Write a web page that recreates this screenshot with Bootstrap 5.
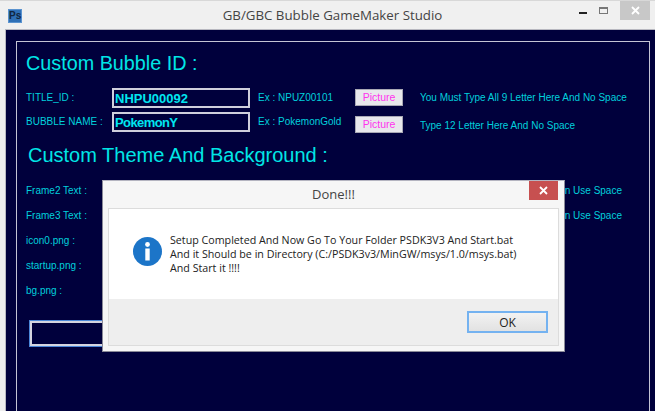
<!DOCTYPE html>
<html lang="en">
<head>
  <meta charset="UTF-8">
  <title>GB/GBC Bubble GameMaker Studio</title>
  <link href="https://cdn.jsdelivr.net/npm/bootstrap@5.3.0/dist/css/bootstrap.min.css" rel="stylesheet">
  <style>
    html, body { height: 411px; overflow: hidden; }
    body { background: #eeeeee; font-family: "Liberation Sans", Arial, sans-serif; color: #00d0dc; font-size: 10px; line-height: 1.2; }
    .app-shell { height: 411px; border-top: 1px solid #d8d8d8; }
    .title-strip { height: 28px; background: #f0f0f0; font-family: "Open Sans", "Noto Sans", sans-serif; font-size: 13.3px; color: #444; }
    .ps-logo { width: 14px; height: 14px; margin-left: 8px; background: #2f6fb5; border: 1px solid #5b93cf; color: #12263f; font-size: 10px; font-weight: 700; line-height: 12px; text-align: center; font-family: "Liberation Sans", sans-serif; }
    .title-text { left: 0; right: 0; top: 7px; text-align: center; padding-left: 10px; }
    .win-btn { width: 21px; height: 19px; }
    .win-min { width: 8px; height: 2px; background: #222; margin-top: 5px; }
    .win-max { width: 9px; height: 7px; border: 1px solid #777; border-top-width: 2px; }
    .win-close { width: 30px; height: 19px; background: #c8c8c8; color: #fff; margin: 0 5px 0 6px; }
    .client-area { margin-left: 5px; background: #00003c; border-top: 1px solid #b8b8c0; border-left: 1px solid #b8b8c0; height: 382px; padding: 11px 0 0 10px; }
    .group-frame { border: 1px solid #c4c4d4; border-bottom: 0; width: 634px; height: 371px; padding-left: 9px; }
    .head-one { font-size: 19.8px; margin: 9px 0 0; color: #00e6e6; font-weight: 400; line-height: 24px; }
    .head-two { font-size: 20px; margin: 9px 0 0 2px; color: #00e6e6; font-weight: 400; line-height: 24px; }
    .id-row { height: 24px; margin-top: 0; }
    .id-row-first { margin-top: 11px; }
    .col-label { width: 86px; flex: none; }
    .name-box { width: 138px; height: 20px; flex: none; background: #00003c; border: 2px solid #cfcfdc; color: #00e6f0; font-weight: 700; font-size: 13px; padding: 0 0 0 1px; border-radius: 0; box-shadow: none; }
    .name-tight { letter-spacing: -.6px; }
    .col-ex { width: 97px; flex: none; margin-left: 8px; font-size: 10px; }
    .pic-btn { width: 48px; height: 17px; flex: none; padding: 0; border-radius: 0; border: 1px solid #a8a8b4; background: #e8e8ec; color: #ff33ee; font-size: 10.5px; line-height: 14px; }
    .pic-up { margin-bottom: 2px; }
    .pic-down { margin-top: 4px; }
    .col-note { margin-left: 17px; }
    .note-down { margin-top: 8px; }
    .theme-list { margin-top: 11px; }
    .theme-row { height: 25.2px; padding-right: 27px; }
    .under-box { width: 160px; height: 25px; margin: 17px 0 0 4px; border: 2px solid #d4d4e0; outline: 1px solid #4a86d8; }
    .done-dialog { left: 102px; top: 180px; width: 463px; height: 172px; background: #f6f6f6; border: 1px solid #8a8a98; border-top-color: #b4b4c0; padding: 0 5px 5px; color: #222; }
    .dialog-head { height: 27px; padding-top: 1px; font-family: "Open Sans", "Noto Sans", sans-serif; font-size: 13px; color: #444; }
    .dialog-close { right: 6px; top: 0; width: 29px; height: 19px; background: #c75050; color: #fff; }
    .dialog-body { background: #fff; border: 1px solid #dcdcdc; height: 138px; }
    .msg-area { height: 91px; padding: 24px 0 0 24px; }
    .msg-text { font-family: "Open Sans", "Noto Sans", sans-serif; font-size: 10.7px; line-height: 14px; margin-left: 8px; color: #222; }
    .dialog-foot { height: 46px; background: #eeeeee; padding: 12px 10px 0 0; }
    .ok-btn { width: 81px; height: 22px; padding: 0; border-radius: 0; border: 2px solid #74b2f0; background: linear-gradient(#f2f2f2, #e2e2e2); color: #222; font-family: "Open Sans", "Noto Sans", sans-serif; font-size: 12px; line-height: 17px; }
  </style>
</head>
<body class="position-relative">

<div class="app-shell d-flex flex-column">
  <div class="title-strip d-flex align-items-start position-relative">
    <div class="ps-logo mt-2">Ps</div>
    <div class="title-text position-absolute">GB/GBC Bubble GameMaker Studio</div>
    <div class="ms-auto d-flex align-items-center justify-content-end" style="height:19px">
      <div class="win-btn d-flex align-items-center justify-content-center"><div class="win-min"></div></div>
      <div class="win-btn d-flex align-items-center justify-content-center"><div class="win-max"></div></div>
      <div class="win-close d-flex align-items-center justify-content-center">
        <svg width="9" height="9" viewBox="0 0 9 9"><path d="M1 1l7 7M8 1l-7 7" stroke="#fff" stroke-width="1.8"/></svg>
      </div>
    </div>
  </div>

  <div class="client-area">
    <div class="group-frame">
      <h1 class="head-one">Custom Bubble ID :</h1>

      <div class="id-row id-row-first d-flex align-items-center">
        <div class="col-label">TITLE_ID :</div>
        <input class="form-control name-box" type="text" value="NHPU00092">
        <div class="col-ex">Ex : NPUZ00101</div>
        <button type="button" class="btn pic-btn pic-up">Picture</button>
        <div class="col-note">You Must Type All 9 Letter Here And No Space</div>
      </div>
      <div class="id-row d-flex align-items-center">
        <div class="col-label">BUBBLE NAME :</div>
        <input class="form-control name-box name-tight" type="text" value="PokemonY">
        <div class="col-ex">Ex : PokemonGold</div>
        <button type="button" class="btn pic-btn pic-down">Picture</button>
        <div class="col-note note-down">Type 12 Letter Here And No Space</div>
      </div>

      <h2 class="head-two">Custom Theme And Background :</h2>

      <div class="theme-list">
        <div class="theme-row d-flex align-items-center justify-content-between"><span>Frame2 Text :</span><span>You Can Use Space</span></div>
        <div class="theme-row d-flex align-items-center justify-content-between"><span>Frame3 Text :</span><span>You Can Use Space</span></div>
        <div class="theme-row d-flex align-items-center"><span>icon0.png :</span></div>
        <div class="theme-row d-flex align-items-center"><span>startup.png :</span></div>
        <div class="theme-row d-flex align-items-center"><span>bg.png :</span></div>
      </div>

      <div class="under-box"></div>
    </div>
  </div>
</div>

<div class="done-dialog position-absolute d-flex flex-column">
  <div class="dialog-head d-flex align-items-center justify-content-center">Done!!!</div>
  <div class="dialog-close position-absolute d-flex align-items-center justify-content-center">
    <svg width="9" height="9" viewBox="0 0 9 9"><path d="M1 1l7 7M8 1l-7 7" stroke="#fff" stroke-width="1.8"/></svg>
  </div>
  <div class="dialog-body d-flex flex-column">
    <div class="msg-area d-flex align-items-start">
      <svg class="mt-1" width="29" height="29" viewBox="0 0 29 29">
        <circle cx="14.5" cy="14.5" r="14.5" fill="#1c75c8"/>
        <circle cx="14.5" cy="7.5" r="2.4" fill="#fff"/>
        <rect x="12.3" y="11.5" width="4.4" height="12" fill="#fff"/>
      </svg>
      <div class="msg-text">Setup Completed And Now Go To Your Folder PSDK3V3 And Start.bat<br>And it Should be in Directory (C:/PSDK3v3/MinGW/msys/1.0/msys.bat)<br>And Start it !!!!</div>
    </div>
    <div class="dialog-foot d-flex justify-content-end align-items-start">
      <button type="button" class="btn ok-btn">OK</button>
    </div>
  </div>
</div>

<script src="https://cdn.jsdelivr.net/npm/bootstrap@5.3.0/dist/js/bootstrap.bundle.min.js"></script>
</body>
</html>
